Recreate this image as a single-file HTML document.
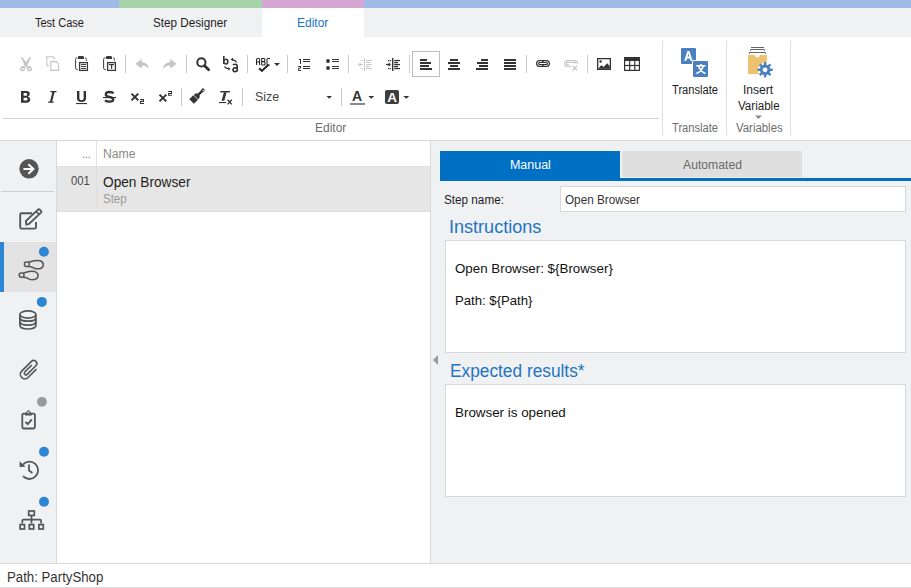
<!DOCTYPE html>
<html><head><meta charset="utf-8">
<style>
*{margin:0;padding:0;box-sizing:border-box}
html,body{width:911px;height:588px;overflow:hidden;background:#fff;font-family:"Liberation Sans",sans-serif;position:relative}
.a{position:absolute}
.t{position:absolute;white-space:nowrap;line-height:1}
svg{position:absolute;overflow:visible}
</style></head><body>

<!-- top stripe -->
<div class="a" style="left:0;top:0;width:119px;height:8px;background:#9fbae7"></div>
<div class="a" style="left:119px;top:0;width:143px;height:8px;background:#a6d3a9"></div>
<div class="a" style="left:262px;top:0;width:102px;height:8px;background:#d5a6d2"></div>
<div class="a" style="left:364px;top:0;width:547px;height:8px;background:#9fbae7"></div>
<!-- tab row -->
<div class="a" style="left:0;top:8px;width:911px;height:29px;background:#f0f1f3"></div>
<div class="a" style="left:262px;top:8px;width:102px;height:29px;background:#fff"></div>

<!-- ribbon -->
<div class="a" style="left:0;top:140px;width:911px;height:1px;background:#d6d6d6"></div>
<div class="a" style="left:3px;top:118px;width:656px;height:1px;background:#d2d2d2"></div>
<div class="a" style="left:662px;top:41px;width:1px;height:94px;background:#dcdcdc"></div>
<div class="a" style="left:726px;top:41px;width:1px;height:94px;background:#dcdcdc"></div>
<div class="a" style="left:790px;top:41px;width:1px;height:94px;background:#dcdcdc"></div>

<!-- sidebar -->
<div class="a" style="left:0;top:141px;width:56px;height:422px;background:#f0f1f3"></div>
<div class="a" style="left:56px;top:141px;width:1px;height:422px;background:#d9d9d9"></div>
<div class="a" style="left:1px;top:191px;width:53px;height:1px;background:#cfcfcf"></div>
<div class="a" style="left:0;top:242px;width:56px;height:50px;background:#e3e3e3"></div>
<div class="a" style="left:0;top:242px;width:4px;height:50px;background:#2d86d3"></div>

<!-- grid -->
<div class="a" style="left:57px;top:166px;width:373px;height:1px;background:#e2e2e2"></div>
<div class="a" style="left:96px;top:141px;width:1px;height:25px;background:#e2e2e2"></div>
<div class="a" style="left:57px;top:167px;width:373px;height:44px;background:#e6e6e6"></div>
<div class="a" style="left:96px;top:167px;width:1px;height:44px;background:#dedede"></div>
<div class="a" style="left:57px;top:211px;width:373px;height:1px;background:#dcdcdc"></div>

<!-- splitter / right panel -->
<div class="a" style="left:430px;top:141px;width:1px;height:422px;background:#d9d9d9"></div>
<div class="a" style="left:431px;top:141px;width:480px;height:422px;background:#f0f1f3"></div>
<div class="a" style="left:440px;top:151px;width:180px;height:30px;background:#0070c4"></div>
<div class="a" style="left:622px;top:151px;width:180px;height:26px;background:#dfdfdf"></div>
<div class="a" style="left:440px;top:178px;width:471px;height:3px;background:#0070c4"></div>

<div class="a" style="left:560px;top:186px;width:346px;height:26px;background:#fff;border:1px solid #d7d7d7"></div>

<div class="a" style="left:445px;top:240px;width:461px;height:113px;background:#fff;border:1px solid #d7d7d7"></div>

<svg style="left:433px;top:355px" width="6" height="10"><path d="M5 0 L0 5 L5 10Z" fill="#9b9b9b"/></svg>

<div class="a" style="left:445px;top:384px;width:461px;height:113px;background:#fff;border:1px solid #d7d7d7"></div>

<!-- status bar -->
<div class="a" style="left:0;top:563px;width:911px;height:1px;background:#d9d9d9"></div>
<div class="a" style="left:0;top:587px;width:911px;height:1px;background:#d9d9d9"></div>

<svg style="left:0;top:0" width="911" height="588" viewBox="0 0 911 588">
<!-- toolbar separators -->
<g fill="#cbcbcb">
<rect x="125" y="55" width="1" height="18"/><rect x="186" y="55" width="1" height="18"/>
<rect x="247" y="55" width="1" height="18"/><rect x="287" y="55" width="1" height="18"/>
<rect x="348" y="55" width="1" height="18"/><rect x="409" y="55" width="1" height="18"/>
<rect x="526" y="55" width="1" height="18"/><rect x="587" y="55" width="1" height="18"/>
<rect x="181" y="88" width="1" height="18"/><rect x="242" y="88" width="1" height="18"/>
<rect x="341" y="88" width="1" height="18"/>
</g>
<!-- scissors -->
<g fill="#c4c4c4">
<path d="M20.8 57 L22.2 57 L27.6 64.6 L26.6 67 L25 66 Z"/>
<path d="M31.2 57 L29.8 57 L24.4 64.6 L25.4 67 L27 66 Z"/>
</g>
<g stroke="#c4c4c4" fill="none" stroke-width="1.5">
<path d="M24.6 66.2 L23.6 67.4 M27.4 66.2 L28.4 67.4"/>
<path d="M22.5 66.6 L24.6 68.4 Q24.2 70.6 22.5 70.6 Q20.6 70.6 20.8 68.6 Z"/>
<path d="M29.5 66.6 L27.4 68.4 Q27.8 70.6 29.5 70.6 Q31.4 70.6 31.2 68.6 Z"/>
</g>
<!-- copy -->
<g stroke="#c4c4c4" fill="none" stroke-width="1.1">
<path d="M48.6 65.6 H46.8 V56.8 H53 L55.2 59.2"/>
<path d="M50.8 61.6 H56.2 L58.6 64.2 V70.4 H50.8 Z"/>
</g>
<!-- paste -->
<g id="pst">
<path fill="#3a3a3a" d="M78.6 56 H83.2 L84 57 V59 H77.8 V57 Z"/>
<g stroke="#3a3a3a" fill="none" stroke-width="1">
<path d="M76.8 57.6 Q75.6 57.9 75.6 59.5 V68.3 Q75.6 69.6 77.8 69.6"/>
<path d="M85.2 57.6 Q86.4 57.9 86.4 59.5 V60.8"/>
<rect x="79.6" y="62.6" width="7.8" height="7.8" stroke-width="1.3"/>
</g>
</g>
<g fill="#3a3a3a">
<rect x="81" y="64" width="5" height="1"/><rect x="81" y="66" width="5" height="1"/><rect x="81" y="68" width="5" height="1"/>
</g>
<use href="#pst" x="28"/>
<g fill="#3a3a3a">
<rect x="109" y="64" width="5" height="1.2"/><rect x="111" y="64" width="1.2" height="5"/>
</g>
<!-- undo / redo -->
<path fill="#c6c6c6" d="M135.4 63.8 L141.8 58.9 V62.2 C145.6 62.2 148.6 64.6 149 68.8 C147 66.6 144.8 65.4 141.8 65.4 V68.8 Z"/>
<path fill="#c6c6c6" d="M176.6 63.8 L170.2 58.9 V62.2 C166.4 62.2 163.4 64.6 163 68.8 C165 66.6 167.2 65.4 170.2 65.4 V68.8 Z"/>
<!-- search -->
<g stroke="#333" fill="none">
<circle cx="201.4" cy="62.4" r="4.1" stroke-width="2"/>
<path d="M204.6 65.8 L208.6 69.8" stroke-width="2.8" stroke-linecap="round"/>
</g>
<!-- replace -->
<g stroke="#333" fill="none" stroke-width="1.6">
<path d="M223.8 56 V64 M223.8 61.2 Q224.4 59.2 226 59.2 Q227.8 59.2 227.8 61.6 Q227.8 64 226 64 Q224.4 64 223.8 62.2"/>
<path d="M233 65 Q233.6 64.2 235 64.2 Q237.2 64.2 237.2 66.2 V71.6 M237.2 67.6 Q233 67.4 233 69.8 Q233 71.6 235 71.6 Q236.6 71.6 237.2 70.4"/>
</g>
<g stroke="#333" fill="none" stroke-width="1.1">
<path d="M236.8 62.4 Q235.6 60.2 232.2 59.6"/><path d="M224.4 66.6 Q225.6 68.6 229 68.8"/>
</g>
<path fill="#333" d="M230.6 59.4 L233 57.6 L233.2 61.2 Z M230.6 68.9 L228.4 66.9 L228.2 70.6 Z"/>
<!-- spell -->
<g stroke="#222" fill="none" stroke-width="1.05">
<path d="M256.5 65 V59.6 Q256.5 58.5 257.6 58.5 H258.6 Q259.6 58.5 259.6 59.6 V65 M256.5 62 H259.6"/>
<path d="M261.7 65 V58.5 H263.9 Q264.8 58.5 264.8 59.5 V60.6 Q264.8 61.6 263.8 61.6 H261.7 M263.8 61.6 Q265 61.6 265 62.7 V64 Q265 65 264 65 H261.7"/>
<path d="M270 58.5 H267.9 Q267 58.5 267 59.5 V64 Q267 65 268 65 H270"/>
</g>
<path d="M259.2 68.2 L261.9 70.9 L268.4 64.8" stroke="#222" stroke-width="2.1" fill="none"/>
<path d="M274 63 H280 L277 66 Z" fill="#333"/>
<!-- numbered list -->
<g fill="#333">
<path d="M299 59 H301 V64 H300 V60 H299 Z"/>
<path d="M298.2 66 H301 V68.6 H299.2 V70 H301 V71 H298.2 V67.8 H300 V67 H298.2 Z"/>
<rect x="303" y="59" width="7" height="1"/><rect x="303" y="61" width="7" height="1"/>
<rect x="303" y="66" width="7" height="1"/><rect x="303" y="68" width="7" height="1"/>
<circle cx="328" cy="61" r="1.9"/><circle cx="328" cy="68" r="1.9"/>
<rect x="332" y="59" width="7" height="1"/><rect x="332" y="61" width="7" height="1"/>
<rect x="332" y="66" width="7" height="1"/><rect x="332" y="68" width="7" height="1"/>
</g>
<!-- outdent (gray) -->
<g fill="#c8c8c8">
<rect x="364" y="58" width="1" height="13"/>
<rect x="366" y="60" width="6" height="1"/><rect x="366" y="62" width="4" height="1"/><rect x="366" y="64" width="6" height="1"/><rect x="366" y="66" width="4" height="1"/><rect x="366" y="68" width="6" height="1"/>
<rect x="360" y="60" width="1" height="1"/><rect x="362" y="60" width="1" height="1"/><rect x="360" y="68" width="1" height="1"/><rect x="362" y="68" width="1" height="1"/>
<rect x="358.5" y="64" width="4.5" height="1"/><path d="M358 64.5 L360.5 62.2 V66.8 Z"/>
</g>
<!-- indent -->
<g fill="#333">
<rect x="392" y="58" width="1.4" height="13"/>
<rect x="394.2" y="59.9" width="5.8" height="1.3"/><rect x="394.2" y="61.9" width="3.8" height="1.3"/><rect x="394.2" y="63.9" width="5.8" height="1.3"/><rect x="394.2" y="65.9" width="3.8" height="1.3"/><rect x="394.2" y="67.9" width="5.8" height="1.3"/>
<rect x="388" y="60" width="1.2" height="1.2"/><rect x="389.8" y="60" width="1.2" height="1.2"/><rect x="388" y="68" width="1.2" height="1.2"/><rect x="389.8" y="68" width="1.2" height="1.2"/>
<rect x="386" y="63.9" width="3.6" height="1.3"/><path d="M391 64.5 L388.6 62.2 V66.8 Z"/>
</g>
<!-- align box -->
<rect x="412.5" y="51.5" width="27" height="25" fill="none" stroke="#bdbdbd"/>
<g fill="#333">
<rect x="420" y="59" width="7" height="2"/><rect x="420" y="62" width="11" height="2"/><rect x="420" y="65" width="9" height="2"/><rect x="420" y="68" width="12" height="2"/>
<rect x="450" y="59" width="8" height="2"/><rect x="448" y="62" width="12" height="2"/><rect x="450" y="65" width="8" height="2"/><rect x="448" y="68" width="12" height="2"/>
<rect x="481" y="59" width="7" height="2"/><rect x="477" y="62" width="11" height="2"/><rect x="479" y="65" width="9" height="2"/><rect x="476" y="68" width="12" height="2"/>
<rect x="504" y="59" width="12" height="2"/><rect x="504" y="62" width="12" height="2"/><rect x="504" y="65" width="12" height="2"/><rect x="504" y="68" width="12" height="2"/>
</g>
<!-- link -->
<g fill="none" stroke="#333" stroke-width="1.2">
<rect x="536.6" y="60.6" width="12.8" height="5.8" rx="2.9"/>
<rect x="538.6" y="62.5" width="8.8" height="2" rx="1"/>
</g>
<path d="M542.2 61 L543 62 L543.8 61 M542.2 66 L543 65 L543.8 66" stroke="#333" stroke-width="0.8" fill="none"/>
<g fill="none" stroke="#c8c8c8" stroke-width="1.2">
<path d="M571 66.4 H567.5 Q564.6 66.4 564.6 63.5 Q564.6 60.6 567.5 60.6 H574.5 Q577.4 60.6 577.4 63.5 V64"/>
<path d="M569 64.5 H566.6 V62.5 H575.4 V63.5"/>
<path d="M572.8 66 L577 70.4 M577 66 L572.8 70.4" stroke-width="1.3"/>
</g>
<!-- image -->
<rect x="597" y="58" width="14" height="12" fill="#333"/>
<rect x="598.3" y="59.3" width="11.4" height="9.4" fill="#fff"/>
<circle cx="600.6" cy="61.5" r="1.2" fill="#333"/>
<path d="M598.2 68.8 L601.2 65.2 L603.7 67 L607.1 63.2 L609.8 66.2 V68.8 Z" fill="#333"/>
<!-- table -->
<rect x="624" y="57" width="16" height="14" fill="#333"/>
<g fill="#fff">
<rect x="625.2" y="61" width="3.9" height="3.9"/><rect x="630.3" y="61" width="3.9" height="3.9"/><rect x="635.4" y="61" width="3.4" height="3.9"/>
<rect x="625.2" y="66.1" width="3.9" height="3.7"/><rect x="630.3" y="66.1" width="3.9" height="3.7"/><rect x="635.4" y="66.1" width="3.4" height="3.7"/>
</g>
<!-- B I U S -->
<path fill="#333" fill-rule="evenodd" d="M21 91 H26.4 Q29.8 91 29.8 93.8 Q29.8 95.9 27.8 96.6 Q30.2 97.3 30.2 99.6 Q30.2 102.7 26.6 102.7 H21 Z M23.6 93.1 V95.8 H26 Q27.2 95.8 27.2 94.4 Q27.2 93.1 26 93.1 Z M23.6 97.8 V100.6 H26.3 Q27.6 100.6 27.6 99.2 Q27.6 97.8 26.3 97.8 Z"/>
<path fill="#333" d="M50.6 91 H56.6 L56.3 92.2 H54.5 L52.2 101.5 H53.8 L53.5 102.7 H48.1 L48.4 101.5 H50 L52.3 92.2 H50.3 Z"/>
<path fill="#333" d="M77 91 H79.4 V98.4 Q79.4 100.2 81.5 100.2 Q83.6 100.2 83.6 98.4 V91 H86 V98.6 Q86 102 81.5 102 Q77 102 77 98.6 Z"/>
<rect x="76" y="103" width="11" height="1.1" fill="#333"/>
<path fill="none" stroke="#333" stroke-width="2.3" d="M113.6 93.2 Q112.4 92 109.4 92 Q105.8 92 105.8 94.6 Q105.8 96.4 109.4 97 Q113.2 97.6 113.2 99.6 Q113.2 101.7 109.4 101.7 Q106.4 101.7 105 100.2"/>
<rect x="103" y="97" width="13" height="1.1" fill="#333"/>
<!-- sub / sup -->
<g stroke="#333" stroke-width="2" fill="none">
<path d="M131.5 93.6 L138.3 100.4 M138.3 93.6 L131.5 100.4"/>
<path d="M159.5 94.6 L166.3 101.4 M166.3 94.6 L159.5 101.4"/>
</g>
<g stroke="#333" stroke-width="1.05" fill="none">
<path d="M140.2 99.6 H143.5 V101.5 H140.5 V103.4 H144"/>
<path d="M168.2 91.5 H171.5 V93.4 H168.5 V95.3 H172"/>
</g>
<!-- brush -->
<g transform="translate(196.3 96.8) rotate(-45)" fill="#333">
<rect x="-6.6" y="-3.3" width="5.6" height="6.6"/>
<path d="M-0.3 -3 H1.6 L3.6 -1.2 V1.2 L1.6 3 H-0.3 Z"/>
<path d="M3.4 -1.25 H9.6 A1.6 1.6 0 0 1 9.6 1.25 H3.4 Z"/>
<circle cx="9.5" cy="0" r="1.7"/>
</g>
<circle cx="203.2" cy="90.4" r="0.75" fill="#fff"/>
<!-- Tx -->
<g fill="#333">
<rect x="220.3" y="91" width="9.7" height="1.4"/>
<path d="M223.9 92.2 H226.6 L224.3 100.8 H221.6 Z"/>
<rect x="219.1" y="102" width="7" height="1.1"/>
</g>
<path d="M227.6 99.8 L231.8 104.4 M231.8 99.8 L227.6 104.4" stroke="#333" stroke-width="1.3"/>
<!-- size arrow, color arrows -->
<g fill="#333">
<path d="M326.5 96 H332 L329.25 98.7 Z"/>
<path d="M368.3 96 H374.2 L371.25 98.7 Z"/>
<path d="M403.3 96 H409.2 L406.25 98.7 Z"/>
</g>
<text x="352" y="101.4" font-family="Liberation Sans" font-weight="bold" font-size="14" fill="#333" transform="translate(352 0) scale(1.0 1) translate(-352 0)">A</text>
<rect x="350" y="103" width="15" height="2" fill="#8a8a8a"/>
<rect x="385" y="90" width="14" height="14" rx="2" fill="#3d3d3d"/>
<text x="387.2" y="101.6" font-family="Liberation Sans" font-weight="bold" font-size="13.5" fill="#fff">A</text>

<!-- translate icon -->
<rect x="681" y="48" width="15" height="16" rx="1" fill="#4a7fc0"/>
<rect x="692" y="60" width="17" height="18" rx="1.5" fill="#fff"/>
<rect x="693" y="61" width="15" height="16" rx="1" fill="#4a7fc0"/>
<path d="M684.2 60.7 L687.4 50.9 H689.4 L692.6 60.7 H690.4 L689.7 58.4 H687.1 L686.4 60.7 Z M687.6 56.6 H689.2 L688.4 53.6 Z" fill="#fff"/>
<g stroke="#fff" stroke-width="1.6" fill="none">
<path d="M696.2 65.8 H705.6 M700.9 64 V65.8 M698.5 66 Q700.5 71.5 705.4 73.6 M703.4 66 Q701.4 71.5 696.4 73.6"/>
</g>
<!-- variables icon -->
<g stroke="#666" stroke-width="1" fill="none">
<path d="M751 47.5 H764"/>
<path d="M750.5 50.8 V49.5 H764.6 V50.8"/>
<path d="M749.4 53.8 V52.5 H765.6 V53.8"/>
</g>
<path fill="#edc16f" d="M748 55 H755 A2.4 2.4 0 0 0 759.8 55 H767 V74 H748 Z"/>
<g transform="translate(765.1 69.8)">
<circle r="7.2" fill="#fff"/>
<g fill="#4a7fc0">
<circle r="5.2"/>
<rect x="-1.2" y="-7.6" width="2.4" height="15.2"/>
<rect x="-7.6" y="-1.2" width="15.2" height="2.4"/>
<rect x="-1.2" y="-7.6" width="2.4" height="15.2" transform="rotate(45)"/>
<rect x="-7.6" y="-1.2" width="15.2" height="2.4" transform="rotate(45)"/>
</g>
<circle r="2.4" fill="#fff"/>
</g>
<path d="M755 115.5 H762 L758.5 119 Z" fill="#888"/>

<!-- sidebar icons -->
<circle cx="29" cy="168.8" r="9.7" fill="#555"/>
<path d="M23.4 168.9 H33.6 M28.4 164.2 L33.4 168.9 L28.4 173.8" stroke="#fff" stroke-width="2" fill="none"/>
<!-- edit -->
<g stroke="#555" stroke-width="1.9" fill="none">
<path d="M32.2 213.2 H21.6 Q20.2 213.2 20.2 214.6 V227.2 Q20.2 228.6 21.6 228.6 H34.6 Q36 228.6 36 227.2 V222"/>
<path d="M26.4 224.6 L25.8 221 L38 209.6 Q39 208.8 40 209.8 L41 210.8 Q41.8 211.8 41 212.6 L29 224 Z"/>
<path d="M36 211.4 L39.2 214.4" stroke-width="1.5"/>
</g>
<!-- footprints -->
<g stroke="#555" stroke-width="1.5" fill="none">
<path transform="translate(0 0)" d="M29 262.1 H26.2 Q24.4 262.1 24.4 264.3 Q24.4 266.5 26.2 266.5 H29.2 Q31.5 266.7 34.5 268.3 Q37 269.3 40.5 268.5 Q43.3 267.6 43.3 264.8 Q43.3 261.8 40 260.8 Q36 260 32 261.2 Q30.5 261.9 29 262.1 Z M29.1 262.1 V266.5"/>
<path transform="translate(-5.2 10.8)" d="M29 262.1 H26.2 Q24.4 262.1 24.4 264.3 Q24.4 266.5 26.2 266.5 H29.2 Q31.5 266.7 34.5 268.3 Q37 269.3 40.5 268.5 Q43.3 267.6 43.3 264.8 Q43.3 261.8 40 260.8 Q36 260 32 261.2 Q30.5 261.9 29 262.1 Z M29.1 262.1 V266.5"/>
</g>
<circle cx="43.9" cy="251.8" r="5" fill="#2d86d3"/>
<!-- database -->
<g stroke="#555" stroke-width="1.7" fill="none">
<ellipse cx="27.9" cy="314.5" rx="8" ry="3.6"/>
<path d="M19.9 314.5 V325 Q19.9 329 27.9 329 Q35.9 329 35.9 325 V314.5"/>
<path d="M19.9 318 Q20.5 321.2 27.9 321.2 Q35.3 321.2 35.9 318"/>
<path d="M19.9 321.9 Q20.5 325.1 27.9 325.1 Q35.3 325.1 35.9 321.9"/>
</g>
<circle cx="41.9" cy="301.9" r="5" fill="#2d86d3"/>
<!-- paperclip -->
<path transform="translate(29.4 369.8) rotate(45)" d="M4.5 -5.5 V6.4 A4.5 4.5 0 0 1 -4.5 6.4 V-7.4 A3.1 3.1 0 0 1 1.7 -7.4 V4.8 A1.7 1.7 0 0 1 -1.7 4.8 V-5" stroke="#555" stroke-width="1.6" fill="none"/>
<!-- clipboard -->
<circle cx="41.9" cy="401.8" r="4.9" fill="#9a9a9a"/>
<g stroke="#555" stroke-width="1.8" fill="none">
<rect x="22.3" y="413.7" width="12.6" height="14.8" rx="1.4"/>
<path d="M25.4 421.8 L27.7 424.2 L31.9 419.4" stroke-width="1.9"/>
</g>
<path d="M28.4 409.8 L31.8 413.4 V415.6 H25 V413.4 Z" fill="#555"/>
<circle cx="28.4" cy="412.4" r="0.9" fill="#f0f1f3"/>
<!-- history -->
<circle cx="44" cy="451.8" r="5" fill="#2d86d3"/>
<g stroke="#555" stroke-width="1.8" fill="none">
<path d="M22.8 464.6 A8.7 8.7 0 1 1 23 476.2"/>
<path d="M29 464.6 V470.6 L32.4 473"/>
</g>
<path d="M19.6 461.2 L25.4 466.8 L19.6 467 Z" fill="#555"/>
<!-- sitemap -->
<circle cx="44" cy="501.8" r="5" fill="#2d86d3"/>
<g stroke="#555" stroke-width="1.7" fill="none">
<rect x="28.7" y="511" width="5.6" height="4.4"/>
<rect x="20.1" y="524.6" width="4.4" height="4.4"/>
<rect x="29.3" y="524.6" width="4.4" height="4.4"/>
<rect x="38.9" y="524.6" width="4.4" height="4.4"/>
<path d="M31.5 515.4 V523.4 M22.3 523.4 V520.8 Q22.3 519.6 23.5 519.6 H40 Q41.1 519.6 41.1 520.8 V523.4"/>
</g>
</svg>

<div class="t" style="left:35.0px;top:17px;font-size:12.5px;color:#1e1e1e;transform:scaleX(0.88);transform-origin:0 0;">Test Case</div>
<div class="t" style="left:153.06px;top:17px;font-size:12.5px;color:#1e1e1e;transform:scaleX(0.9359);transform-origin:0 0;">Step Designer</div>
<div class="t" style="left:297.14px;top:17px;font-size:12.5px;color:#1873c6;transform:scaleX(0.9594);transform-origin:0 0;">Editor</div>
<div class="t" style="left:314.84px;top:122px;font-size:12.5px;color:#6e6e6e;transform:scaleX(0.9594);transform-origin:0 0;">Editor</div>
<div class="t" style="left:671.8px;top:122px;font-size:12.5px;color:#6e6e6e;transform:scaleX(0.8902);transform-origin:0 0;">Translate</div>
<div class="t" style="left:735.5px;top:122px;font-size:12.5px;color:#6e6e6e;transform:scaleX(0.9118);transform-origin:0 0;">Variables</div>
<div class="t" style="left:671.8px;top:84px;font-size:12.5px;color:#1e1e1e;transform:scaleX(0.8902);transform-origin:0 0;">Translate</div>
<div class="t" style="left:743.03px;top:84px;font-size:12.5px;color:#1e1e1e;transform:scaleX(0.9667);transform-origin:0 0;">Insert</div>
<div class="t" style="left:737.8px;top:100px;font-size:12.5px;color:#1e1e1e;transform:scaleX(0.9267);transform-origin:0 0;">Variable</div>
<div class="t" style="left:81.86px;top:148px;font-size:12.5px;color:#8a8a8a;transform:scaleX(0.8444);transform-origin:0 0;">...</div>
<div class="t" style="left:255.21px;top:91px;font-size:12.5px;color:#444444;transform:scaleX(0.9913);transform-origin:0 0;">Size</div>
<div class="t" style="left:102.83px;top:148px;font-size:12.5px;color:#8a8a8a;transform:scaleX(0.975);transform-origin:0 0;">Name</div>
<div class="t" style="left:70.8px;top:175px;font-size:12.5px;color:#4a4a4a;transform:scaleX(0.9048);transform-origin:0 0;">001</div>
<div class="t" style="left:102.82px;top:175px;font-size:14px;color:#1e1e1e;transform:scaleX(0.9773);transform-origin:0 0;">Open Browser</div>
<div class="t" style="left:103.04px;top:193px;font-size:12px;color:#9a9a9a;transform:scaleX(0.9565);transform-origin:0 0;">Step</div>
<div class="t" style="left:509.9px;top:159px;font-size:12.5px;color:#ffffff;">Manual</div>
<div class="t" style="left:682.9px;top:159px;font-size:12.5px;color:#6a6a6a;transform:scaleX(0.975);transform-origin:0 0;">Automated</div>
<div class="t" style="left:444.16px;top:194px;font-size:12.5px;color:#1e1e1e;transform:scaleX(0.9371);transform-origin:0 0;">Step name:</div>
<div class="t" style="left:565.06px;top:194px;font-size:12.5px;color:#333333;transform:scaleX(0.938);transform-origin:0 0;">Open Browser</div>
<div class="t" style="left:449.19px;top:218px;font-size:18px;color:#2274c4;transform:scaleX(1.0033);transform-origin:0 0;">Instructions</div>
<div class="t" style="left:455.47px;top:262px;font-size:13px;color:#111111;transform:scaleX(1.0255);transform-origin:0 0;">Open Browser: ${Browser}</div>
<div class="t" style="left:455.49px;top:294px;font-size:13px;color:#111111;transform:scaleX(1.0105);transform-origin:0 0;">Path: ${Path}</div>
<div class="t" style="left:449.54px;top:362px;font-size:18px;color:#2274c4;transform:scaleX(0.9604);transform-origin:0 0;">Expected results*</div>
<div class="t" style="left:455.47px;top:406px;font-size:13px;color:#111111;transform:scaleX(1.0292);transform-origin:0 0;">Browser is opened</div>
<div class="t" style="left:6.96px;top:570px;font-size:14px;color:#333333;transform:scaleX(0.9446);transform-origin:0 0;">Path: PartyShop</div>
</body></html>
